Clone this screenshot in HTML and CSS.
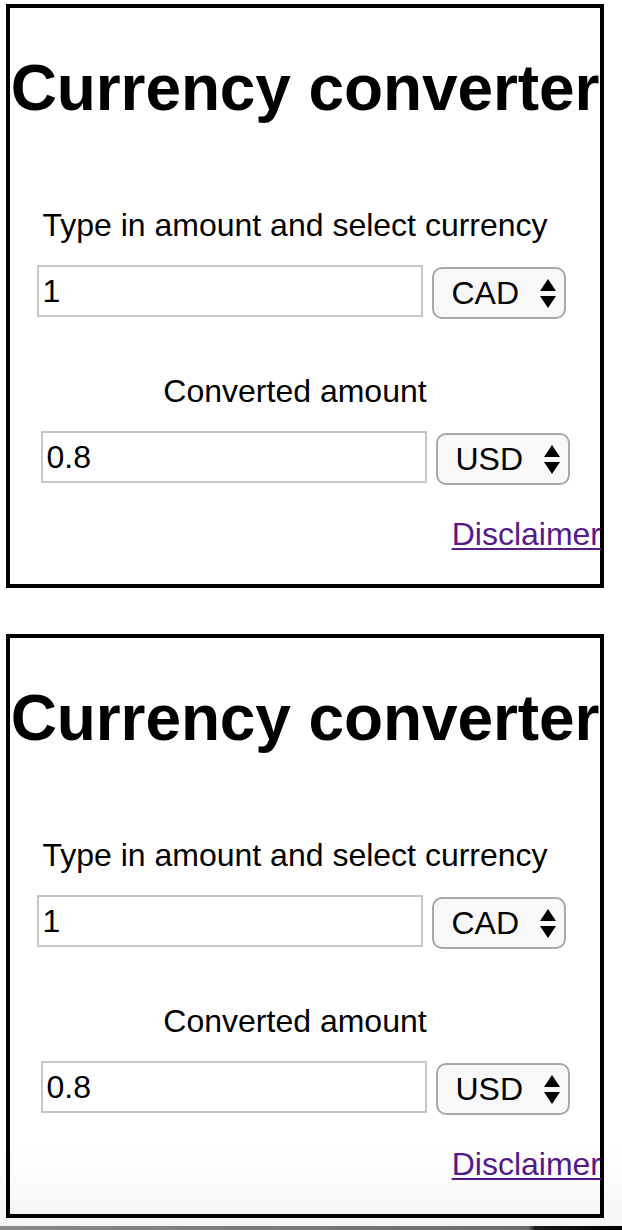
FILE: index.html
```html
<!DOCTYPE html>
<html lang="en">
<head>
<meta charset="utf-8">
<title>Currency converter</title>
<link rel="stylesheet" href="styles.css">
</head>
<body>
<div class="card">
  <h1 class="title">Currency converter</h1>
  <p class="label label-first">Type in amount and select currency</p>
  <div class="row row-first">
    <input class="amount" type="text" value="1">
    <div class="picker">
      <select class="currency"><option>CAD</option><option>USD</option></select>
      <svg class="arrows" viewBox="0 0 18 32" width="18" height="32" aria-hidden="true"><path d="M9 2 L17 14 L1 14 Z M1 19 L17 19 L9 31 Z" fill="#000"/></svg>
    </div>
  </div>
  <p class="label label-second">Converted amount</p>
  <div class="row row-second">
    <input class="amount" type="text" value="0.8">
    <div class="picker">
      <select class="currency"><option>USD</option><option>CAD</option></select>
      <svg class="arrows" viewBox="0 0 18 32" width="18" height="32" aria-hidden="true"><path d="M9 2 L17 14 L1 14 Z M1 19 L17 19 L9 31 Z" fill="#000"/></svg>
    </div>
  </div>
  <div class="footer"><a class="disclaimer" href="#">Disclaimer</a></div>
</div>
<div class="card">
  <h1 class="title">Currency converter</h1>
  <p class="label label-first">Type in amount and select currency</p>
  <div class="row row-first">
    <input class="amount" type="text" value="1">
    <div class="picker">
      <select class="currency"><option>CAD</option><option>USD</option></select>
      <svg class="arrows" viewBox="0 0 18 32" width="18" height="32" aria-hidden="true"><path d="M9 2 L17 14 L1 14 Z M1 19 L17 19 L9 31 Z" fill="#000"/></svg>
    </div>
  </div>
  <p class="label label-second">Converted amount</p>
  <div class="row row-second">
    <input class="amount" type="text" value="0.8">
    <div class="picker">
      <select class="currency"><option>USD</option><option>CAD</option></select>
      <svg class="arrows" viewBox="0 0 18 32" width="18" height="32" aria-hidden="true"><path d="M9 2 L17 14 L1 14 Z M1 19 L17 19 L9 31 Z" fill="#000"/></svg>
    </div>
  </div>
  <div class="footer"><a class="disclaimer" href="#">Disclaimer</a></div>
</div>
<div class="shade"><div class="shade-edge"></div></div>
</body>
</html>
```

FILE: styles.css
```css
html, body {
  margin: 0;
  padding: 0;
  background: #fff;
}

body {
  font-family: "Liberation Sans", Arial, Helvetica, sans-serif;
  color: #000;
  padding-top: 4px;
  padding-left: 6px;
}

.card {
  width: 598px;
  box-sizing: border-box;
  border: 4px solid #000;
  text-align: center;
  font-size: 32px;
  padding-bottom: 32px;
}

.card + .card {
  margin-top: 46px;
}

.title {
  margin: 44px -10px 0;
  font-size: 64px;
  line-height: 72px;
  font-weight: bold;
  white-space: nowrap;
  letter-spacing: -0.1px;
}

.label {
  margin: 0;
  line-height: 36px;
  white-space: nowrap;
}

.label-first {
  margin-top: 83px;
  padding-right: 20px;
}

.label-second {
  margin-top: 54px;
  padding-right: 20px;
}

.row {
  display: flex;
  justify-content: center;
  align-items: flex-start;
  gap: 9px;
  height: 54px;
  margin-top: 22px;
}

.row-first {
  padding-right: 8px;
}

.amount {
  width: 386px;
  height: 52px;
  box-sizing: border-box;
  border: 2px solid #c6c6c6;
  border-radius: 0;
  padding: 0 4px;
  margin: 0;
  font-family: "Liberation Sans", Arial, Helvetica, sans-serif;
  font-size: 32px;
  color: #000;
  background: #fff;
  outline: none;
}

.picker {
  position: relative;
  width: 134px;
  height: 52px;
  margin-top: 2px;
}

.currency {
  appearance: none;
  -webkit-appearance: none;
  width: 100%;
  height: 100%;
  box-sizing: border-box;
  border: 2px solid #a8a8a8;
  border-radius: 10px;
  background: #f8f8f8;
  padding: 0 0 0 18px;
  margin: 0;
  font-family: "Liberation Sans", Arial, Helvetica, sans-serif;
  font-size: 32px;
  color: #000;
  text-align: left;
}

.arrows {
  position: absolute;
  right: 9px;
  top: 10px;
  pointer-events: none;
}

.footer {
  margin-top: 31px;
  margin-right: -1px;
  text-align: right;
  line-height: 36px;
}

.disclaimer {
  color: #551a8b;
  text-decoration: underline;
  text-decoration-thickness: 2px;
  text-underline-offset: 3px;
}

.shade {
  position: fixed;
  left: 0;
  right: 0;
  bottom: 0;
  height: 84px;
  pointer-events: none;
  background: linear-gradient(to bottom, rgba(0, 0, 0, 0) 0, rgba(0, 0, 0, 0.045) 100%);
}

.shade-edge {
  position: absolute;
  left: 0;
  right: 0;
  bottom: 0;
  height: 4px;
  background: linear-gradient(to right, #8a8a8a 0, #6c6c6c 85%, #1a1a1a 86%, #000 100%);
}
```
